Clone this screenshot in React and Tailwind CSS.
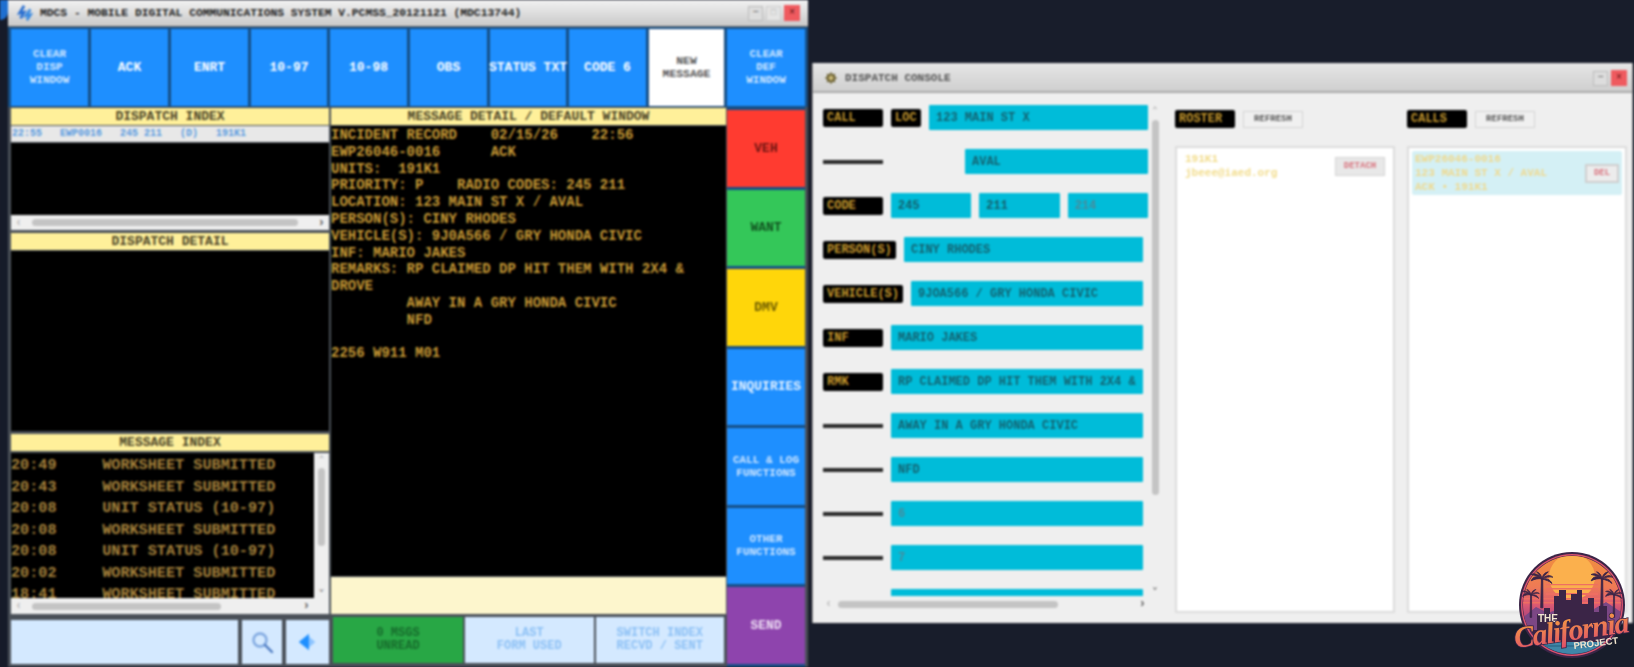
import React from "react";

const topButtons = [
  { label: ["CLEAR", "DISP", "WINDOW"], w: "w-[77px]", small: true },
  { label: ["ACK"], w: "w-[77px]" },
  { label: ["ENRT"], w: "w-[77px]" },
  { label: ["10-97"], w: "w-[76px]" },
  { label: ["10-98"], w: "w-[77px]" },
  { label: ["OBS"], w: "w-[77px]" },
  { label: ["STATUS TXT"], w: "w-[76px]" },
  { label: ["CODE 6"], w: "w-[77px]" },
];

const messages = [
  ["20:49", "WORKSHEET SUBMITTED"],
  ["20:43", "WORKSHEET SUBMITTED"],
  ["20:08", "UNIT STATUS (10-97)"],
  ["20:08", "WORKSHEET SUBMITTED"],
  ["20:08", "UNIT STATUS (10-97)"],
  ["20:02", "WORKSHEET SUBMITTED"],
  ["18:41", "WORKSHEET SUBMITTED"],
];

const detail = `INCIDENT RECORD    02/15/26    22:56
EWP26046-0016      ACK
UNITS:  191K1
PRIORITY: P    RADIO CODES: 245 211
LOCATION: 123 MAIN ST X / AVAL
PERSON(S): CINY RHODES
VEHICLE(S): 9J0A566 / GRY HONDA CIVIC
INF: MARIO JAKES
REMARKS: RP CLAIMED DP HIT THEM WITH 2X4 &
DROVE
         AWAY IN A GRY HONDA CIVIC
         NFD

2256 W911 M01`;

function Header({ children, className = "" }) {
  return (
    <div className={`h-[17px] bg-[#fff09a] text-[#4a4326] text-[13px] font-bold leading-[17px] text-center ${className}`}>
      {children}
    </div>
  );
}

function HScroll({ thumb, className = "" }) {
  return (
    <div className={`flex items-center bg-[#efefef] text-[#555] px-[4px] gap-[10px] ${className}`}>
      <span className="text-[12px] font-bold leading-none text-[#bbb]">‹</span>
      <div className={`h-[7px] rounded bg-[#c4c4c4] ${thumb}`} />
      <div className="flex-1" />
      <span className="text-[12px] font-bold leading-none">›</span>
    </div>
  );
}

function SideButton({ className, children }) {
  return (
    <div className={`flex-1 flex items-center justify-center text-center font-bold ${className}`}>
      <div>{children}</div>
    </div>
  );
}

function BlackLabel({ children, className = "w-[60px]" }) {
  return (
    <div className={`h-[18px] shrink-0 bg-black rounded-[2px] text-[#c99a2e] text-[12px] font-bold leading-[18px] px-[4px] whitespace-pre ${className}`}>
      {children}
    </div>
  );
}

function Dash() {
  return <div className="w-[60px] h-[4px] shrink-0 bg-[#2b2b2b]" />;
}

function Field({ children, className = "flex-1", muted }) {
  return (
    <div className={`h-[25px] bg-[#00bcd9] rounded-[1px] px-[7px] text-[12px] font-bold leading-[27px] whitespace-pre overflow-hidden ${muted ? "text-[#4a8a9a]" : "text-[#14616f]"} ${className}`}>
      {children}
    </div>
  );
}

function Row({ children, className = "w-[325px]" }) {
  return <div className={`flex items-center gap-[8px] h-[25px] shrink-0 ${className}`}>{children}</div>;
}

function Palm({ x, y, s = 1 }) {
  return (
    <g transform={`translate(${x} ${y}) scale(${s})`} fill="#3b2547" stroke="#3b2547" strokeWidth="1">
      <path d="M-0.6 0L-1.4 32h2.4L0.8 0z" />
      <path d="M0 0c-5-4-10-3-12 2 4-2 8-3 12-2zM0 0c-4-5-8-7-12-5 5 1 8 2 12 5zM0 0c-1-5-3-7-6-8 2 2 4 5 6 8zM0 0c1-5 3-7 7-8-3 3-5 5-7 8zM0 0c4-4 9-5 12-2-4-1-8 0-12 2zM0 0c4-1 9 0 11 5-3-3-7-4-11-5z" />
    </g>
  );
}

function Logo() {
  return (
    <svg viewBox="0 0 120 108" className="absolute left-[1512px] top-[552px] w-[120px] h-[108px]">
      <defs>
        <linearGradient id="sky" x1="0" y1="0" x2="0" y2="1">
          <stop offset="0" stopColor="#f08f3e" />
          <stop offset="0.4" stopColor="#ee7a55" />
          <stop offset="0.62" stopColor="#dd5a72" />
          <stop offset="0.8" stopColor="#a8447e" />
        </linearGradient>
        <linearGradient id="script" x1="0" y1="0" x2="0" y2="1">
          <stop offset="0" stopColor="#f7a23e" />
          <stop offset="1" stopColor="#e0506a" />
        </linearGradient>
        <clipPath id="disc">
          <circle cx="60" cy="53" r="49" />
        </clipPath>
      </defs>
      <circle cx="60" cy="53" r="53" fill="#3b2547" />
      <circle cx="60" cy="53" r="51" fill="#d9536f" />
      <circle cx="60" cy="53" r="49.5" fill="#3b2547" />
      <g clipPath="url(#disc)">
        <rect x="8" y="3" width="104" height="80" fill="url(#sky)" />
        <circle cx="60" cy="25" r="23" fill="#fbb04d" />
        <path d="M34 32h52v1.2H34zM34 36h52v1.6H34zM34 41h52v2H34zM10 46h100v1.6H10zM10 50h100v1.6H10z" fill="#ee6f62" />
        <path d="M8 68l16-13 12 6 16-6 30 2 12-7 18 12v22H8z" fill="#7c4785" />
        <path d="M25 80V62h7v-6h6v6h4V44h5v-6h7v10h5V42h6v-4h5v14h6v-6h6v14h5v-6h8v26z" fill="#3b2547" />
        <rect x="8" y="78" width="104" height="12" fill="#3b2547" />
        <rect x="8" y="90" width="104" height="16" fill="#3f86a8" />
        <path d="M8 94h104" stroke="#2f6a8c" strokeWidth="1.5" />
      </g>
      <Palm x={19} y={43} s={0.7} />
      <Palm x={30} y={27} s={0.9} />
      <Palm x={90} y={27} s={0.9} />
      <Palm x={102} y={43} s={0.7} />
      <text x="26" y="70" fontFamily="'Liberation Sans', sans-serif" fontSize="10" fontWeight="700" fill="#f3e6d0">THE</text>
      <text x="60" y="88" textAnchor="middle" transform="rotate(-8 60 82)" fontFamily="'Liberation Serif', serif" fontStyle="italic" fontWeight="700" fontSize="30" fill="url(#script)" stroke="#3b2547" strokeWidth="1.6" paintOrder="stroke" textLength="116">California</text>
      <text x="62" y="97" transform="rotate(-7 62 97)" fontFamily="'Liberation Sans', sans-serif" fontSize="9.5" fontWeight="700" fill="#f3e6d0">PROJECT</text>
    </svg>
  );
}

export default function App() {
  return (
    <div className="relative w-[1634px] h-[667px] overflow-hidden bg-[#181d2b] font-['Liberation_Mono',monospace]">
      <div className="flex w-full h-full blur-[1px]">
        {/* left strip */}
        <div className="w-[8px] shrink-0 bg-[#161b29]">
          <div className="w-[8px] h-[20px] bg-[#1e6fd0] rounded-br-full" />
        </div>

        {/* MDCS window */}
        <div className="w-[800px] h-full shrink-0 bg-[#4a5058] flex flex-col">
          <div className="h-[27px] shrink-0 bg-gradient-to-b from-[#f2f2f2] to-[#c9c9c9] flex items-center pl-[8px] pr-[8px] border-b border-[#6a6a6a]">
            <svg viewBox="0 0 20 20" className="w-[18px] h-[18px] shrink-0" fill="none" strokeWidth="3">
              <path d="M9 2L4 10l5-1-4 7" stroke="#2a6fd0" />
              <path d="M16 6l-5 7 5-1-4 6" stroke="#3a8ae0" />
            </svg>
            <span className="ml-[6px] text-[11.3px] font-bold text-[#222] whitespace-pre">MDCS - MOBILE DIGITAL COMMUNICATIONS SYSTEM V.PCMSS_20121121 (MDC13744)</span>
            <div className="ml-auto flex items-center gap-[3px]">
              <div className="w-[15px] h-[15px] bg-[#ddd] border border-[#bbb] text-[10px] leading-[12px] text-center text-[#555]">−</div>
              <div className="w-[15px] h-[15px] bg-[#e4e4e4] border border-[#ccc] text-[9px] leading-[12px] text-center text-[#aaa]">□</div>
              <div className="w-[16px] h-[16px] bg-[#ef5a5f] text-[10px] leading-[15px] text-center text-[#5a1010]">×</div>
            </div>
          </div>

          {/* top buttons */}
          <div className="flex gap-[3px] pl-[3px] pt-[2px] h-[80px] shrink-0 bg-[#164f86]">
            {topButtons.map((b, i) => (
              <div key={i} className={`${b.w} h-[77px] shrink-0 bg-[#1e8fff] flex items-center justify-center text-center font-bold ${b.small ? "text-[11px] leading-[13px] text-[#cfe6ff]" : "text-[13px] text-white"}`}>
                <div className="whitespace-pre">
                  {b.label.map((l) => (
                    <div key={l}>{l}</div>
                  ))}
                </div>
              </div>
            ))}
            <div className="w-[75px] h-[77px] shrink-0 bg-white text-[#555] flex items-center justify-center text-center text-[11.4px] leading-[13px] font-bold">
              <div>NEW<br />MESSAGE</div>
            </div>
            <div className="w-[78px] h-[77px] shrink-0 bg-[#1e8fff] text-[#cfe6ff] flex items-center justify-center text-center text-[11px] leading-[13px] font-bold">
              <div>CLEAR<br />DEF<br />WINDOW</div>
            </div>
          </div>

          <div className="flex flex-1 min-h-0">
            {/* left column */}
            <div className="w-[318px] ml-[3px] shrink-0 pt-[1px] flex flex-col">
              <Header>DISPATCH INDEX</Header>
              <div className="h-[16px] mt-[1px] bg-[#e8e8e8] pl-[1px] text-[10px] font-bold leading-[16px] text-[#5a9be0] whitespace-pre">22:55   EWP0016   245 211   (D)   191K1</div>
              <div className="h-[72px] mt-[1px] bg-black" />
              <HScroll thumb="w-[281px]" className="h-[15px]" />
              <Header className="mt-[3px]">DISPATCH DETAIL</Header>
              <div className="h-[180px] mt-[1px] bg-black" />
              <Header className="mt-[3px]">MESSAGE INDEX</Header>
              <div className="h-[161px] mt-[2px] flex bg-[#efefef]">
                <div className="flex-1 flex flex-col">
                  <div className="h-[145px] pt-[2px] bg-black overflow-hidden text-[15.2px] font-bold leading-[21.5px] text-[#a5813b] whitespace-pre">
                    {messages.map((m, i) => (
                      <div key={i}>{m[0]}     {m[1]}</div>
                    ))}
                  </div>
                  <HScroll thumb="w-[189px]" className="h-[16px]" />
                </div>
                <div className="w-[15px] flex flex-col items-center text-[9px] leading-none text-[#999] bg-[#efefef] pt-[3px]">
                  <span>⌃</span>
                  <div className="w-[7px] h-[78px] mt-[3px] rounded bg-[#c4c4c4]" />
                  <div className="flex-1" />
                  <span className="pb-[20px] font-bold text-[#666]">⌄</span>
                </div>
              </div>
              <div className="flex gap-[4px] mt-[6px] h-[44px]">
                <div className="w-[227px] bg-[#d4e9ff]" />
                <div className="w-[40px] bg-[#d4e9ff] flex items-center justify-center">
                  <svg viewBox="0 0 24 24" className="w-[24px] h-[24px]" fill="none" stroke="#4a78c0" strokeWidth="2.4">
                    <circle cx="10" cy="10" r="6.5" stroke="#7fa8e0" />
                    <path d="M15 15l7 7" strokeLinecap="round" />
                  </svg>
                </div>
                <div className="flex-1 bg-[#d4e9ff] flex items-center justify-center">
                  <svg viewBox="0 0 24 24" className="w-[22px] h-[22px]">
                    <path d="M2 12L13 3v18z" fill="#1e8fff" />
                    <path d="M13 6l7 6-7 6z" fill="#8cc4ff" />
                  </svg>
                </div>
              </div>
            </div>

            {/* center column */}
            <div className="w-[395px] ml-[2px] shrink-0 pt-[1px] flex flex-col">
              <Header>MESSAGE DETAIL / DEFAULT WINDOW</Header>
              <div className="h-[450px] mt-[1px] bg-black text-[14px] font-bold leading-[16.8px] text-[#c89a35] whitespace-pre overflow-hidden pt-[1px]">{detail}</div>
              <div className="h-[37px] mt-[1px] bg-[#fdf6cd]" />
              <div className="flex gap-[2px] mt-[3px] h-[46px] pl-[2px] pr-[2px]">
                <div className="w-[130px] bg-[#28a745] text-[#176b2c] text-[12px] leading-[13px] font-bold text-center flex items-center justify-center">
                  <div>0 MSGS<br />UNREAD</div>
                </div>
                <div className="flex-1 bg-[#d4e9ff] text-[#8cc0f5] text-[12px] leading-[13px] font-bold text-center flex items-center justify-center">
                  <div>LAST<br />FORM USED</div>
                </div>
                <div className="flex-1 bg-[#d4e9ff] text-[#8cc0f5] text-[12px] leading-[13px] font-bold text-center flex items-center justify-center">
                  <div>SWITCH INDEX<br />RECVD / SENT</div>
                </div>
              </div>
            </div>

            {/* right buttons */}
            <div className="w-[78px] ml-[1px] shrink-0 pt-[3px] pb-[3px] flex flex-col gap-[3px] bg-[#164f86]">
              <SideButton className="bg-[#ff3b30] text-[#6a1512] text-[13px]">VEH</SideButton>
              <SideButton className="bg-[#34c759] text-[#11501f] text-[13px]">WANT</SideButton>
              <SideButton className="bg-[#ffd60a] text-[#6b5a00] text-[13px]">DMV</SideButton>
              <SideButton className="bg-[#1e8fff] text-[#e8f3ff] text-[13px]">INQUIRIES</SideButton>
              <SideButton className="bg-[#1e8fff] text-[#cfe6ff] text-[11px] leading-[13px]">CALL &amp; LOG<br />FUNCTIONS</SideButton>
              <SideButton className="bg-[#1e8fff] text-[#cfe6ff] text-[11px] leading-[13px]">OTHER<br />FUNCTIONS</SideButton>
              <SideButton className="bg-[#8e44ad] text-[#efe0f5] text-[13px]">SEND</SideButton>
            </div>
          </div>
        </div>

        {/* Dispatch console */}
        <div className="ml-[4px] mt-[63px] w-[821px] h-[560px] shrink-0 bg-[#efefef] flex flex-col border-l border-r border-[#999]">
          <div className="h-[30px] shrink-0 bg-gradient-to-b from-[#e6e6e6] to-[#cfcfcf] border-b-2 border-[#aaa] flex items-center pl-[11px] pr-[5px] pt-[2px]">
            <svg viewBox="0 0 20 20" className="w-[14px] h-[14px]">
              <path d="M10 1l2 3.5 4-.5-.5 4L19 10l-3.5 2 .5 4-4-.5L10 19l-2-3.5-4 .5.5-4L1 10l3.5-2L4 4l4 .5z" fill="#6b6030" />
              <circle cx="10" cy="10" r="3.5" fill="#c9b878" />
            </svg>
            <span className="ml-[7px] text-[11px] font-bold text-[#555]">DISPATCH CONSOLE</span>
            <div className="ml-auto flex items-center gap-[3px]">
              <div className="w-[15px] h-[15px] bg-[#ddd] border border-[#bbb] text-[10px] leading-[12px] text-center text-[#555]">−</div>
              <div className="w-[16px] h-[16px] bg-[#ef5a5f] text-[10px] leading-[15px] text-center text-[#5a1010]">×</div>
            </div>
          </div>

          <div className="flex flex-1 min-h-0 pl-[10px]">
            {/* form */}
            <div className="w-[352px] shrink-0 relative overflow-hidden">
              <div className="h-[503px] pt-[12px] overflow-hidden flex flex-col gap-[19px]">
                <Row>
                  <BlackLabel>CALL</BlackLabel>
                  <BlackLabel className="w-[30px]">LOC</BlackLabel>
                  <Field>123 MAIN ST X</Field>
                </Row>
                <Row>
                  <Dash />
                  <Field className="ml-[74px] flex-1">AVAL</Field>
                </Row>
                <Row>
                  <BlackLabel>CODE</BlackLabel>
                  <Field>245</Field>
                  <Field>211</Field>
                  <Field muted>214</Field>
                </Row>
                <Row className="w-[320px]">
                  <BlackLabel className="w-[73px]">PERSON(S)</BlackLabel>
                  <Field>CINY RHODES</Field>
                </Row>
                <Row className="w-[320px]">
                  <BlackLabel className="w-[80px]">VEHICLE(S)</BlackLabel>
                  <Field>9JOA566 / GRY HONDA CIVIC</Field>
                </Row>
                <Row className="w-[320px]">
                  <BlackLabel>INF</BlackLabel>
                  <Field>MARIO JAKES</Field>
                </Row>
                <Row className="w-[320px]">
                  <BlackLabel>RMK</BlackLabel>
                  <Field>RP CLAIMED DP HIT THEM WITH 2X4 &amp;</Field>
                </Row>
                <Row className="w-[320px]">
                  <Dash />
                  <Field>AWAY IN A GRY HONDA CIVIC</Field>
                </Row>
                <Row className="w-[320px]">
                  <Dash />
                  <Field>NFD</Field>
                </Row>
                <Row className="w-[320px]">
                  <Dash />
                  <Field muted>6</Field>
                </Row>
                <Row className="w-[320px]">
                  <Dash />
                  <Field muted>7</Field>
                </Row>
                <Row className="w-[320px]">
                  <Dash />
                  <Field />
                </Row>
              </div>
              <div className="w-[325px] h-[16px] flex items-center px-[2px]">
                <span className="text-[12px] font-bold text-[#bbb]">‹</span>
                <div className="ml-[6px] w-[220px] h-[7px] rounded bg-[#c4c4c4]" />
                <div className="flex-1" />
                <span className="text-[12px] font-bold text-[#555]">›</span>
              </div>
              <div className="absolute left-[326px] top-[14px] w-[12px] flex flex-col items-center text-[9px] leading-none text-[#999]">
                <span>⌃</span>
                <div className="w-[7px] h-[375px] mt-[4px] rounded bg-[#c4c4c4]" />
                <span className="mt-[88px] font-bold text-[#555]">⌄</span>
              </div>
            </div>

            {/* roster */}
            <div className="w-[220px] shrink-0 pt-[17px] flex flex-col">
              <div className="flex items-center gap-[8px] h-[18px]">
                <BlackLabel>ROSTER</BlackLabel>
                <div className="w-[60px] h-[17px] bg-[#f0f0f0] border border-[#d4d4d4] text-[9px] font-bold leading-[15px] text-center text-[#555]">REFRESH</div>
              </div>
              <div className="mt-[18px] h-[467px] bg-white border-2 border-[#dcdcdc] pl-[8px] pr-[8px] pt-[4px] flex justify-between">
                <div className="text-[11px] font-bold leading-[14px] text-[#f2dc8a]">
                  <div>191K1</div>
                  <div>jbeee@iaed.org</div>
                </div>
                <div className="w-[50px] h-[19px] mt-[5px] bg-[#e8e8e8] border border-[#d4d4d4] text-[9px] font-bold leading-[17px] text-center text-[#d9737e]">DETACH</div>
              </div>
            </div>

            {/* calls */}
            <div className="w-[220px] ml-[12px] shrink-0 pt-[17px] flex flex-col">
              <div className="flex items-center gap-[8px] h-[18px]">
                <BlackLabel>CALLS</BlackLabel>
                <div className="w-[60px] h-[17px] bg-[#f0f0f0] border border-[#d4d4d4] text-[9px] font-bold leading-[15px] text-center text-[#555]">REFRESH</div>
              </div>
              <div className="mt-[18px] h-[467px] bg-white border-2 border-[#dcdcdc] p-[3px]">
                <div className="h-[44px] bg-[#d4f0f5] rounded-[2px] pl-[3px] pr-[3px] flex justify-between items-center">
                  <div className="text-[11px] leading-[14px] font-bold text-[#efd98e]">
                    <div>EWP26046-0016</div>
                    <div>123 MAIN ST X / AVAL</div>
                    <div>ACK • 191K1</div>
                  </div>
                  <div className="w-[34px] h-[19px] bg-[#ececec] border-2 border-[#cfcfcf] text-[9px] font-bold leading-[15px] text-center text-[#d9737e]">DEL</div>
                </div>
              </div>
            </div>
          </div>
        </div>
      </div>
      <Logo />
    </div>
  );
}
